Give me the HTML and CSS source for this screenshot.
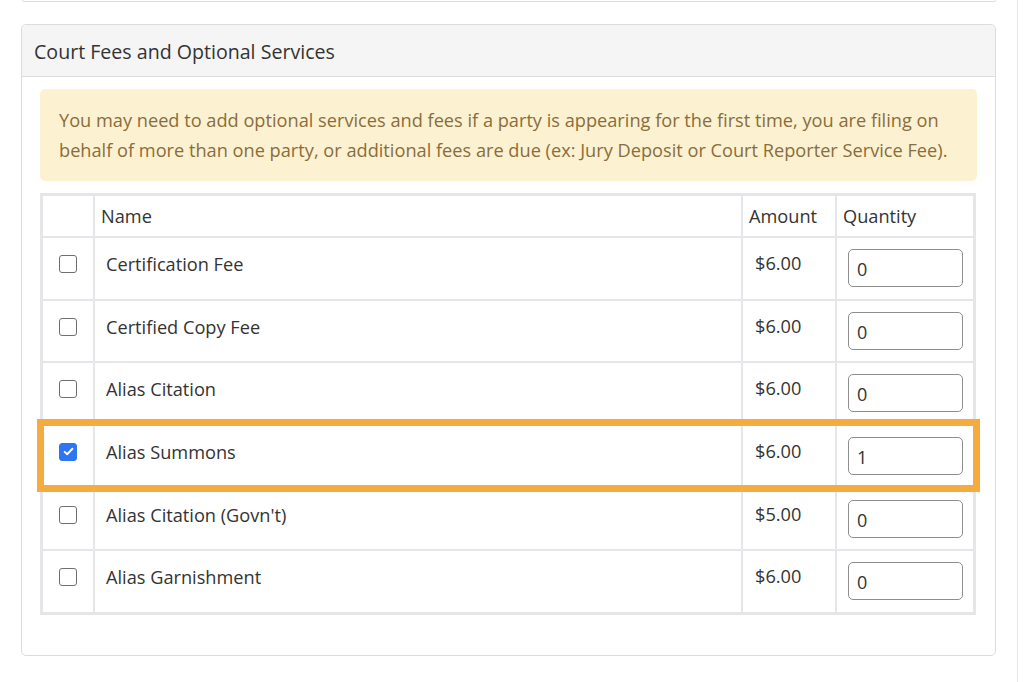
FILE: index.html
```html
<!DOCTYPE html>
<html lang="en">
<head>
<meta charset="utf-8">
<title>Court Fees and Optional Services</title>
<link rel="stylesheet" href="styles.css">
</head>
<body>
<div class="page">
  <main class="main">
    <div class="prev-panel"></div>
    <section class="panel">
      <header class="panel-heading">Court Fees and Optional Services</header>
      <div class="panel-body">
        <div class="alert">You may need to add optional services and fees if a party is appearing for the first time, you are filing on behalf of more than one party, or additional fees are due (ex: Jury Deposit or Court Reporter Service Fee).</div>
        <table class="fees">
          <colgroup>
            <col class="c-check"><col class="c-name"><col class="c-amount"><col class="c-qty">
          </colgroup>
          <thead>
            <tr><th></th><th>Name</th><th>Amount</th><th>Quantity</th></tr>
          </thead>
          <tbody>
            <tr>
              <td class="check"><span class="box"></span></td>
              <td class="name">Certification Fee</td>
              <td class="amount">$6.00</td>
              <td class="qty"><input class="qty-input" type="text" value="0"></td>
            </tr>
            <tr>
              <td class="check"><span class="box"></span></td>
              <td class="name">Certified Copy Fee</td>
              <td class="amount">$6.00</td>
              <td class="qty"><input class="qty-input" type="text" value="0"></td>
            </tr>
            <tr>
              <td class="check"><span class="box"></span></td>
              <td class="name">Alias Citation</td>
              <td class="amount">$6.00</td>
              <td class="qty"><input class="qty-input" type="text" value="0"></td>
            </tr>
            <tr>
              <td class="check"><span class="box checked"><svg viewBox="0 0 16 16" width="13" height="13"><path d="M3.2 8.4 L6.4 11.4 L12.8 4.6" fill="none" stroke="#fff" stroke-width="2.3" stroke-linecap="round" stroke-linejoin="round"/></svg></span></td>
              <td class="name">Alias Summons</td>
              <td class="amount">$6.00</td>
              <td class="qty"><input class="qty-input" type="text" value="1"></td>
            </tr>
            <tr>
              <td class="check"><span class="box"></span></td>
              <td class="name">Alias Citation (Govn't)</td>
              <td class="amount">$5.00</td>
              <td class="qty"><input class="qty-input" type="text" value="0"></td>
            </tr>
            <tr>
              <td class="check"><span class="box"></span></td>
              <td class="name">Alias Garnishment</td>
              <td class="amount">$6.00</td>
              <td class="qty"><input class="qty-input" type="text" value="0"></td>
            </tr>
          </tbody>
        </table>
        <div class="highlight"></div>
      </div>
    </section>
  </main>
  <div class="scroll-track"></div>
</div>
</body>
</html>
```

FILE: styles.css
```css
html, body {
  margin: 0;
  padding: 0;
  background: #fff;
}
body {
  font-family: "Open Sans", "Liberation Sans", sans-serif;
  font-size: 18.2px;
  color: #333;
  height: 682px;
  overflow: hidden;
}
.page {
  display: flex;
  height: 682px;
}
.main {
  flex: 1;
  padding: 0 21px 0 21px;
}
.scroll-track {
  width: 6px;
  border-left: 1px solid #e6e6e6;
  background: #fff;
}
.prev-panel {
  height: 1px;
  margin: 0 0 0 1px;
  border: 1px solid #dedede;
  border-top: none;
  border-radius: 0 0 4px 4px;
}
.panel {
  margin-top: 22px;
  border: 1px solid #dcdcdc;
  border-radius: 5px;
  background: #fff;
}
.panel-heading {
  height: 52px;
  box-sizing: border-box;
  padding: 13px 12px 0;
  background: #f5f5f5;
  border-bottom: 1px solid #dcdcdc;
  border-radius: 5px 5px 0 0;
  font-size: 19.6px;
  line-height: 28px;
  color: #333;
}
.panel-body {
  position: relative;
  padding: 12px 18px 40px;
}
.alert {
  background: #fcf2d2;
  color: #8a6d3b;
  border-radius: 5px;
  padding: 16px 18px 16px 19px;
  line-height: 30px;
  font-size: 18.2px;
  margin-bottom: 12px;
}
.fees {
  width: 936px;
  table-layout: fixed;
  border-collapse: separate;
  border-spacing: 0;
  border: 3px solid #e4e6e9;
}
.c-check { width: 50px; }
.c-name { width: 648px; }
.c-amount { width: 94px; }
.c-qty { width: 138px; }
.fees th {
  font-weight: normal;
  text-align: left;
  padding: 8px 5px 8px 6px;
  line-height: 24px;
  height: 39px;
  box-sizing: border-box;
  border-left: 2px solid #e4e6e9;
  white-space: nowrap;
}
.fees th:first-child,
.fees td:first-child {
  border-left: none;
}
.fees td {
  vertical-align: top;
  border-top: 2px solid #e4e6e9;
  border-left: 2px solid #e4e6e9;
  height: 62.67px;
  box-sizing: border-box;
  padding: 14px 11px 0;
  line-height: 24px;
}
.fees td.check {
  padding: 17px 0 0 16px;
}
.fees td.amount {
  padding-left: 12px;
  padding-top: 13px;
}
.fees td.qty {
  padding: 11px 11px 0 11px;
}
.box {
  display: flex;
  align-items: center;
  justify-content: center;
  width: 18px;
  height: 18px;
  box-sizing: border-box;
  border: 1px solid #6f6f6f;
  border-radius: 3px;
  background: #fff;
}
.box.checked {
  background: #2f74f2;
  border-color: #2f74f2;
}
.qty-input {
  display: block;
  width: 115px;
  height: 38px;
  box-sizing: border-box;
  border: 1px solid #8e8e8e;
  border-radius: 5px;
  padding: 2px 8px 0;
  font-family: "Open Sans", "Liberation Sans", sans-serif;
  font-size: 18px;
  color: #333;
  background: #fff;
}
.highlight {
  position: absolute;
  left: 15px;
  top: 342px;
  width: 943px;
  height: 73px;
  box-sizing: border-box;
  border: 7px solid #f5ab3d;
  pointer-events: none;
}
```
